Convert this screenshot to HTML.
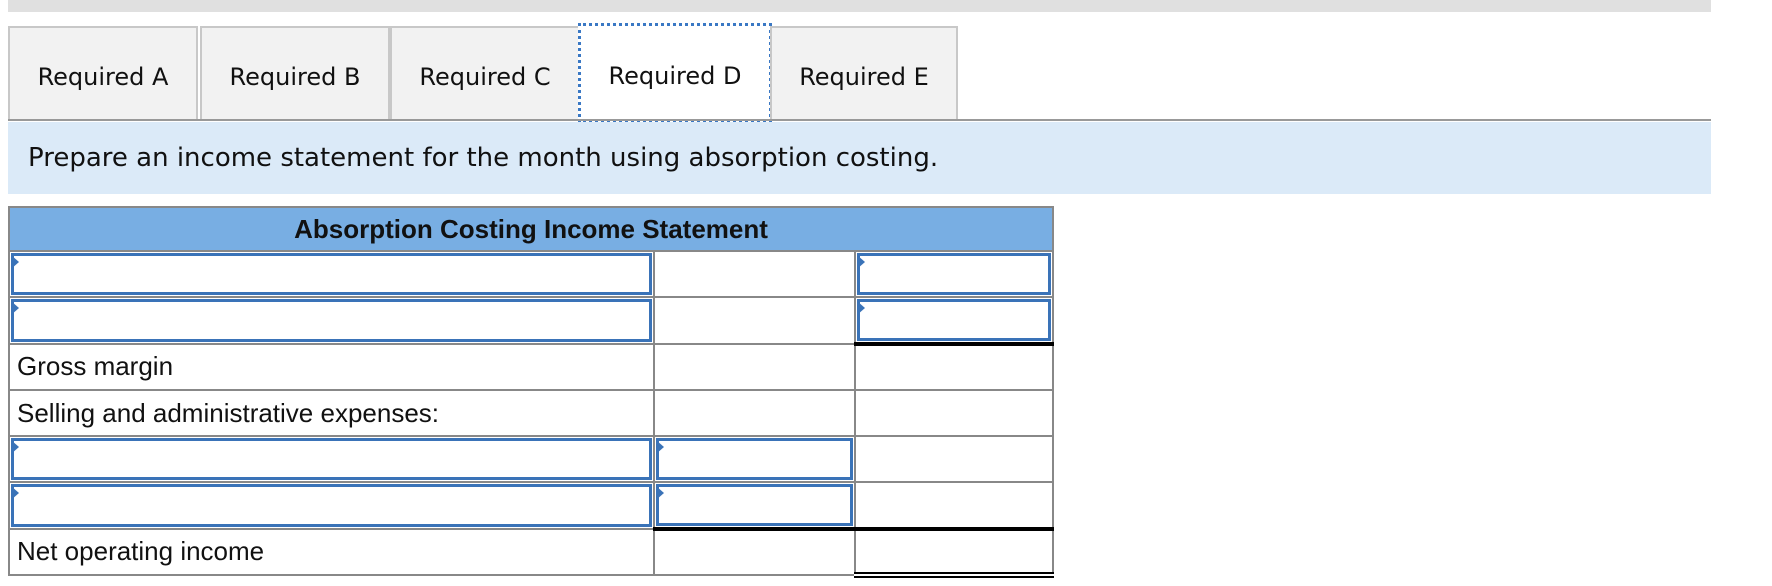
<!DOCTYPE html>
<html><head><style>
body{margin:0;width:1772px;height:586px;background:#fff;position:relative;overflow:hidden;font-family:"DejaVu Sans","Liberation Sans",sans-serif}
.bar{position:absolute;left:8px;top:0;width:1703px;height:12px;background:#e0e0e0}
.tab{position:absolute;top:26px;height:94px;background:#f2f2f2;border:2px solid #c8c8c8;border-bottom:none;box-sizing:border-box;font-size:24px;color:#111;display:flex;align-items:center;justify-content:center;padding-top:6px}
.tab.act{background:#fff;border:3px dotted #3a78c4;height:100px;top:23px}
.line{position:absolute;left:8px;top:119px;width:1703px;height:2px;background:#999}
.band{position:absolute;left:8px;top:122px;width:1703px;height:72px;background:#dbeaf8;font-size:26px;color:#111;line-height:72px;padding-left:20px;box-sizing:border-box}
table{position:absolute;left:8px;top:206px;width:1044px;table-layout:fixed;border-collapse:collapse;font-family:"Liberation Sans",Arial,sans-serif}
tr{height:46.3px}
tr.h{height:44px}
td{border:2px solid #888;padding:0;font-size:26px;color:#111;position:relative}
th{background:#78aee3;border:2px solid #888;font-size:26px;color:#111;font-weight:bold;padding:0}
.in{position:absolute;left:1px;top:1px;right:1px;bottom:1px;border:3px solid #3a73b8}
.in:before{content:"";position:absolute;left:-3px;top:-1px;border-left:8px solid #3a73b8;border-top:7px solid transparent;border-bottom:7px solid transparent}
.lb{padding-left:7px}
.bb{border-bottom:4px solid #000}
.db{border-bottom:6px double #000}
</style></head><body>
<div class="bar"></div>
<div class="tab" style="left:8px;width:190px">Required A</div>
<div class="tab" style="left:200px;width:190px">Required B</div>
<div class="tab" style="left:390px;width:190px">Required C</div>
<div class="tab act" style="left:578px;width:194px">Required D</div>
<div class="tab" style="left:770px;width:188px">Required E</div>
<div class="line"></div>
<div class="band">Prepare an income statement for the month using absorption costing.</div>
<table>
<colgroup><col style="width:645px"><col style="width:201px"><col style="width:198px"></colgroup>
<tr class="h"><th colspan="3">Absorption Costing Income Statement</th></tr>
<tr><td><div class="in"></div></td><td></td><td><div class="in"></div></td></tr>
<tr><td><div class="in"></div></td><td></td><td class="bb"><div class="in"></div></td></tr>
<tr><td class="lb">Gross margin</td><td></td><td></td></tr>
<tr><td class="lb">Selling and administrative expenses:</td><td></td><td></td></tr>
<tr><td><div class="in"></div></td><td><div class="in"></div></td><td></td></tr>
<tr><td><div class="in"></div></td><td class="bb"><div class="in"></div></td><td class="bb"></td></tr>
<tr><td class="lb">Net operating income</td><td></td><td class="db"></td></tr>
</table>
</body></html>
